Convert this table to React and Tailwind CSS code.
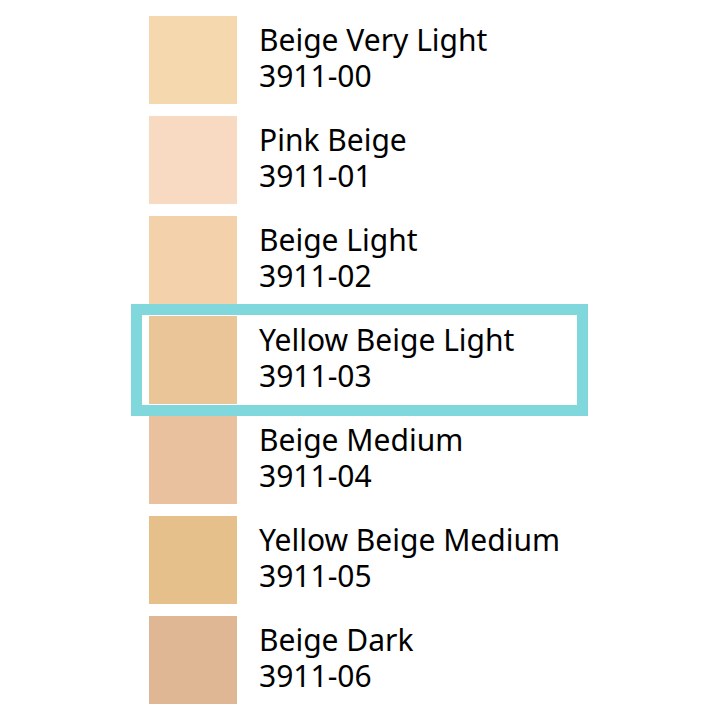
const shades = [
  { name: 'Beige Very Light', code: '3911-00', color: 'bg-[#f5d8ae]' },
  { name: 'Pink Beige', code: '3911-01', color: 'bg-[#f8d9c2]' },
  { name: 'Beige Light', code: '3911-02', color: 'bg-[#f3d1ab]' },
  { name: 'Yellow Beige Light', code: '3911-03', color: 'bg-[#e9c597]', active: true },
  { name: 'Beige Medium', code: '3911-04', color: 'bg-[#e9c19f]' },
  { name: 'Yellow Beige Medium', code: '3911-05', color: 'bg-[#e6c08b]' },
  { name: 'Beige Dark', code: '3911-06', color: 'bg-[#e0b795]' },
];

export default function App() {
  return (
    <div className="w-[720px] h-[720px] bg-white overflow-hidden pt-4 pl-[149px]" style={{ fontFamily: '"Noto Sans", sans-serif' }}>
      <div className="flex flex-col gap-3">
        {shades.map(s => (
          <div key={s.code} className="relative flex items-center h-[88px]">
            <div className={`w-[88px] h-[88px] shrink-0 ${s.color}`} />
            <div className="ml-[22px] mb-[4px] text-[30px] leading-[36px] text-black">
              <div>{s.name}</div>
              <div>{s.code}</div>
            </div>
            {s.active && <span className="absolute left-[-18px] top-[-12px] w-[457px] h-[112px] border-[11px] border-[#80d8dc]" />}
          </div>
        ))}
      </div>
    </div>
  );
}
